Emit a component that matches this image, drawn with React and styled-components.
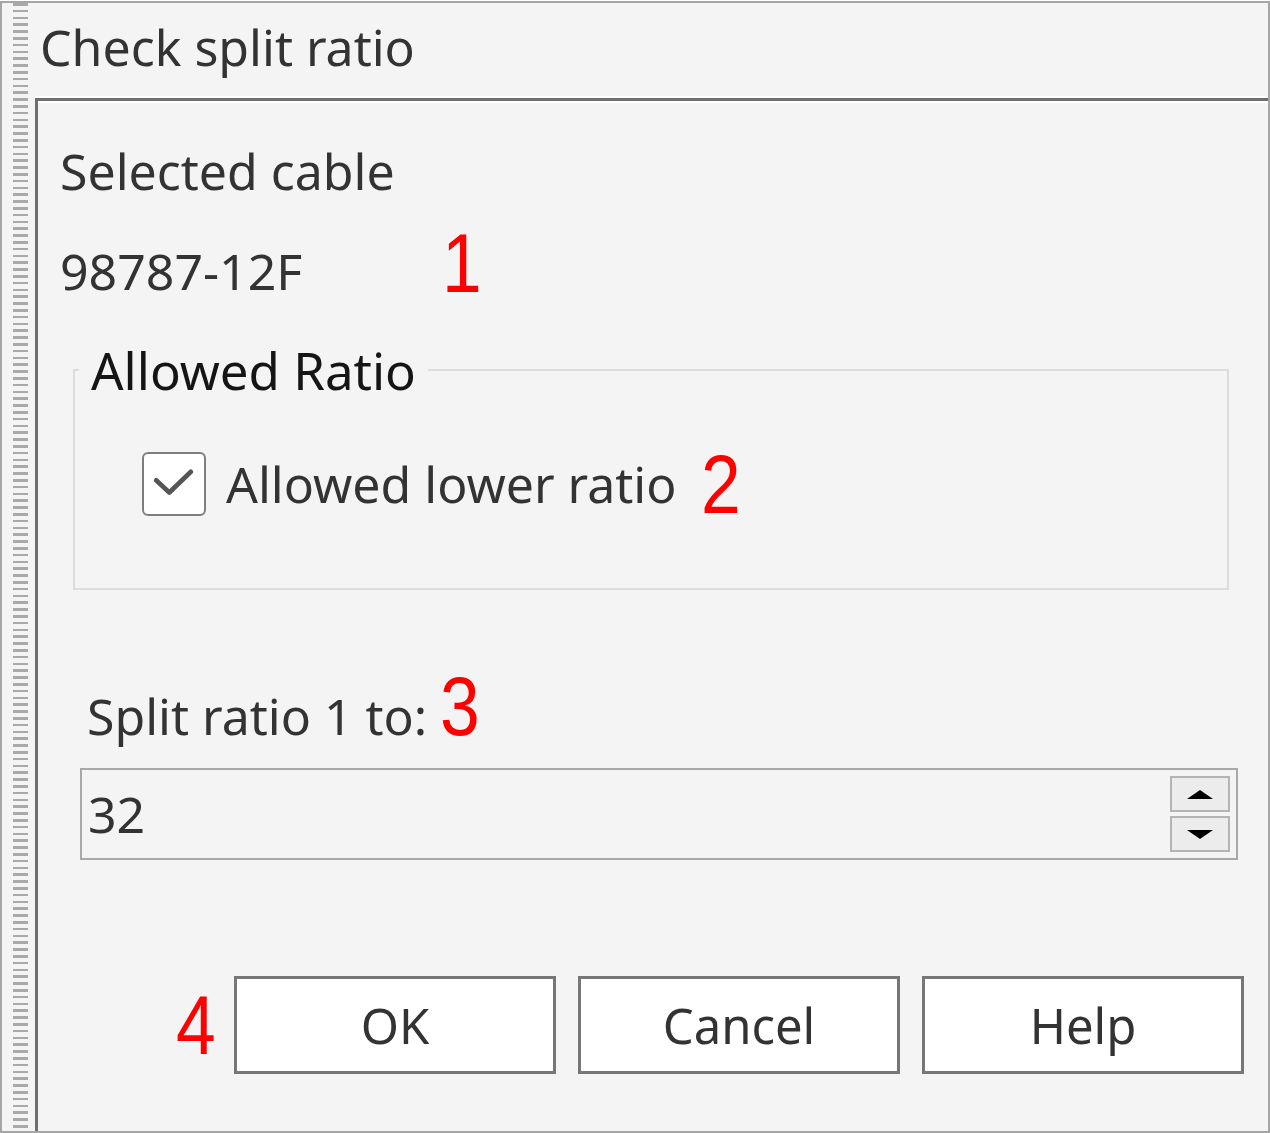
import React from 'react';
import styled, { createGlobalStyle } from 'styled-components';

const GlobalStyle = createGlobalStyle`
  html, body {
    margin: 0;
    padding: 0;
    background: #ffffff;
  }
  body {
    font-family: "Noto Sans", "Open Sans", sans-serif;
  }
`;

const Window = styled.div`
  box-sizing: border-box;
  width: 1270px;
  height: 1132px;
  margin-top: 1px;
  border: 2px solid #a6a6a6;
  background: #f4f4f4;
  display: flex;
  color: #333333;
`;

const Grip = styled.div`
  width: 33px;
  flex: none;
  display: flex;
  justify-content: center;
  padding-left: 3px;
  box-sizing: border-box;

  &::before {
    content: '';
    width: 15px;
    height: 100%;
    background: repeating-linear-gradient(
      to bottom,
      #a9a9a9 0px,
      #a9a9a9 2.6px,
      transparent 2.6px,
      transparent 6.8px
    );
  }
`;

const Main = styled.div`
  flex: 1;
  display: flex;
  flex-direction: column;
  min-width: 0;
`;

const TitleBar = styled.div`
  height: 95px;
  flex: none;
  box-sizing: border-box;
  padding: 11px 0 0 5px;
  font-size: 50px;
  line-height: 66px;
  border-bottom: 2px solid #ffffff;
`;

const Panel = styled.div`
  flex: 1;
  border-top: 3px solid #6f6f6f;
  border-left: 3px solid #6f6f6f;
  box-shadow: inset 0 2px 0 #ffffff;
  display: flex;
  flex-direction: column;
  padding: 0 24px 0 0;
`;

const Label = styled.div`
  font-size: 50px;
  line-height: 60px;
  margin-left: ${(p) => p.$indent || 22}px;
  margin-top: ${(p) => p.$top || 0}px;
  white-space: nowrap;
`;

const Marker = styled.span`
  display: inline-block;
  font-family: "Liberation Sans", Arial, sans-serif;
  font-size: 84px;
  line-height: 0;
  color: #ff0000;
  margin-left: ${(p) => p.$gap}px;
  vertical-align: ${(p) => p.$shift || 0}px;
  transform: scaleX(0.85);
  transform-origin: left center;
`;

const Group = styled.fieldset`
  margin: 39px 0 0 35px;
  width: 1156px;
  height: 250px;
  box-sizing: border-box;
  border: 2px solid #dcdcdc;
  padding: 0;
  min-width: 0;
`;

const Legend = styled.legend`
  font-size: 51px;
  line-height: 60px;
  padding: 0 12px;
  margin-left: 4px;
  color: #151515;
`;

const CheckRow = styled.label`
  display: flex;
  align-items: center;
  margin: 50px 0 0 66px;
  font-size: 50px;
  white-space: nowrap;
`;

const Box = styled.span`
  width: 64px;
  height: 64px;
  box-sizing: border-box;
  border: 2px solid #7e7e7e;
  border-radius: 6px;
  background: #ffffff;
  display: flex;
  align-items: center;
  justify-content: center;
  margin: 0 20px 0 1px;
`;

const Spin = styled.div`
  margin: 22px 0 0 42px;
  width: 1158px;
  height: 92px;
  box-sizing: border-box;
  border: 2px solid #a8a8a8;
  display: flex;
  align-items: center;
  padding: 0 6px 0 6px;
`;

const SpinValue = styled.div`
  flex: 1;
  font-size: 50px;
`;

const SpinButtons = styled.div`
  display: flex;
  flex-direction: column;
  gap: 4px;
`;

const SpinButton = styled.div`
  width: 60px;
  height: 36px;
  box-sizing: border-box;
  border: 2px solid #b4b4b4;
  background: #ececec;
  display: flex;
  align-items: center;
  justify-content: center;
`;

const Arrow = styled.span`
  width: 0;
  height: 0;
  border-left: 13px solid transparent;
  border-right: 13px solid transparent;
  ${(p) =>
    p.$up
      ? 'border-bottom: 9px solid #000;'
      : 'border-top: 9px solid #000;'}
`;

const Footer = styled.div`
  margin-top: auto;
  margin-bottom: 57px;
  display: flex;
  justify-content: flex-end;
  align-items: center;
  gap: 22px;
`;

const Button = styled.button`
  width: 322px;
  height: 98px;
  box-sizing: border-box;
  border: 3px solid #767676;
  background: #ffffff;
  font-family: inherit;
  font-size: 49px;
  color: #333333;
  padding: 0;
`;

const FooterMarker = styled(Marker)`
  line-height: 1;
  margin-right: -11px;
`;

export default function App() {
  return (
    <>
      <GlobalStyle />
      <Window>
        <Grip />
        <Main>
          <TitleBar>Check split ratio</TitleBar>
          <Panel>
            <Label $top={40}>Selected cable</Label>
            <Label $top={40}>
              98787-12F
              <Marker $gap={140} $shift={-2}>1</Marker>
            </Label>
            <Group>
              <Legend>Allowed Ratio</Legend>
              <CheckRow>
                <Box>
                  <svg width="64" height="64" viewBox="0 0 64 64">
                    <path
                      d="M13 28 L27 41 L50 19"
                      fill="none"
                      stroke="#555"
                      strokeWidth="5"
                      strokeLinecap="round"
                      strokeLinejoin="round"
                    />
                  </svg>
                </Box>
                Allowed lower ratio
                <Marker $gap={25} $shift={-9}>2</Marker>
              </CheckRow>
            </Group>
            <Label $top={96} $indent={49}>
              Split ratio 1 to:
              <Marker $gap={13}>3</Marker>
            </Label>
            <Spin>
              <SpinValue>32</SpinValue>
              <SpinButtons>
                <SpinButton>
                  <Arrow $up />
                </SpinButton>
                <SpinButton>
                  <Arrow />
                </SpinButton>
              </SpinButtons>
            </Spin>
            <Footer>
              <FooterMarker $gap={0}>4</FooterMarker>
              <Button>OK</Button>
              <Button>Cancel</Button>
              <Button>Help</Button>
            </Footer>
          </Panel>
        </Main>
      </Window>
    </>
  );
}
